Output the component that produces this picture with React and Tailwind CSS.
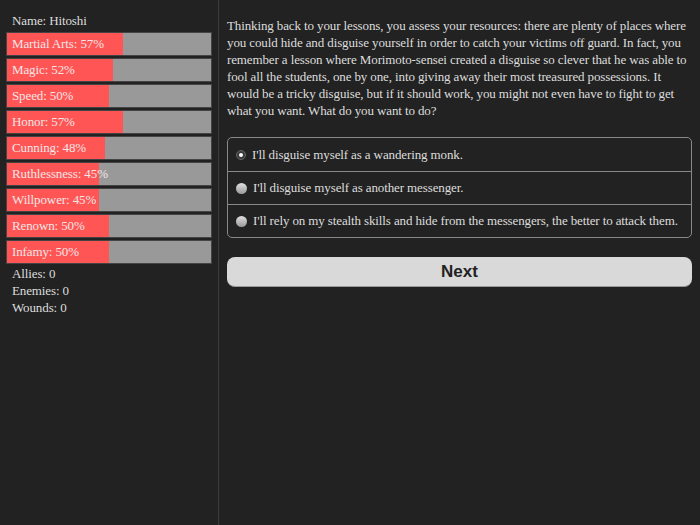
import React, { useState } from 'react';

const stats = [
  { label: 'Martial Arts', value: 57 },
  { label: 'Magic', value: 52 },
  { label: 'Speed', value: 50 },
  { label: 'Honor', value: 57 },
  { label: 'Cunning', value: 48 },
  { label: 'Ruthlessness', value: 45 },
  { label: 'Willpower', value: 45 },
  { label: 'Renown', value: 50 },
  { label: 'Infamy', value: 50 },
];

const storyLines = [
  'Thinking back to your lessons, you assess your resources: there are plenty of places where',
  'you could hide and disguise yourself in order to catch your victims off guard. In fact, you',
  'remember a lesson where Morimoto-sensei created a disguise so clever that he was able to',
  'fool all the students, one by one, into giving away their most treasured possessions. It',
  'would be a tricky disguise, but if it should work, you might not even have to fight to get',
  'what you want. What do you want to do?',
];

const choices = [
  "I'll disguise myself as a wandering monk.",
  "I'll disguise myself as another messenger.",
  "I'll rely on my stealth skills and hide from the messengers, the better to attack them.",
];

function StatBar({ label, value }) {
  return (
    <div className="relative h-[24px] w-[206px] bg-[#999] border border-[#444]">
      <div className="absolute inset-y-0 left-0 bg-[#ff5555]" style={{ width: `${value}%` }} />
      <div className="relative pl-[5px] leading-[22px] text-[#f2e6e6] whitespace-nowrap">
        {label}: {value}%
      </div>
    </div>
  );
}

function Radio({ checked }) {
  return checked ? (
    <span className="flex h-[10px] w-[10px] shrink-0 items-center justify-center rounded-full bg-[#3a3a3a] border border-[#666]">
      <span className="h-[4px] w-[4px] rounded-full bg-white" />
    </span>
  ) : (
    <span className="h-[11px] w-[11px] shrink-0 rounded-full bg-gradient-to-b from-[#e0e0e0] to-[#9a9a9a]" />
  );
}

export default function App() {
  const [selected, setSelected] = useState(0);

  return (
    <div className="flex h-[525px] w-[700px] bg-[#222] text-[13px] tracking-[-0.12px] text-[#ddd] font-['Liberation_Serif',serif]">
      <div className="w-[219px] shrink-0 border-r border-[#3c3c3c] pt-[12px] pl-[6px]">
        <div className="pl-[6px] leading-[18px]">Name: Hitoshi</div>
        <div className="mt-[2px] flex flex-col gap-[2px]">
          {stats.map((s) => (
            <StatBar key={s.label} {...s} />
          ))}
        </div>
        <div className="mt-[1px] pl-[6px] leading-[17px]">
          <div>Allies: 0</div>
          <div>Enemies: 0</div>
          <div>Wounds: 0</div>
        </div>
      </div>

      <div className="flex-1 pl-[8px] pr-[8px] pt-[17px]">
        <p className="leading-[17px] text-[#ddd] whitespace-nowrap">
          {storyLines.map((line, i) => (
            <React.Fragment key={i}>
              {line}
              {i < storyLines.length - 1 && <br />}
            </React.Fragment>
          ))}
        </p>

        <div className="mt-[18px] rounded-[5px] border border-[#888]">
          {choices.map((c, i) => (
            <label
              key={i}
              onClick={() => setSelected(i)}
              className={`flex h-[33px] items-center gap-[6px] pl-[8px] cursor-pointer ${i > 0 ? 'border-t border-[#888]' : ''}`}
            >
              <Radio checked={selected === i} />
              <span>{c}</span>
            </label>
          ))}
        </div>

        <button className="mt-[19px] h-[30px] w-full rounded-[8px] bg-[#d9d9d9] border-b border-[#999] text-[17px] font-bold tracking-normal text-[#222] font-['Liberation_Sans',sans-serif]">
          Next
        </button>
      </div>
    </div>
  );
}
